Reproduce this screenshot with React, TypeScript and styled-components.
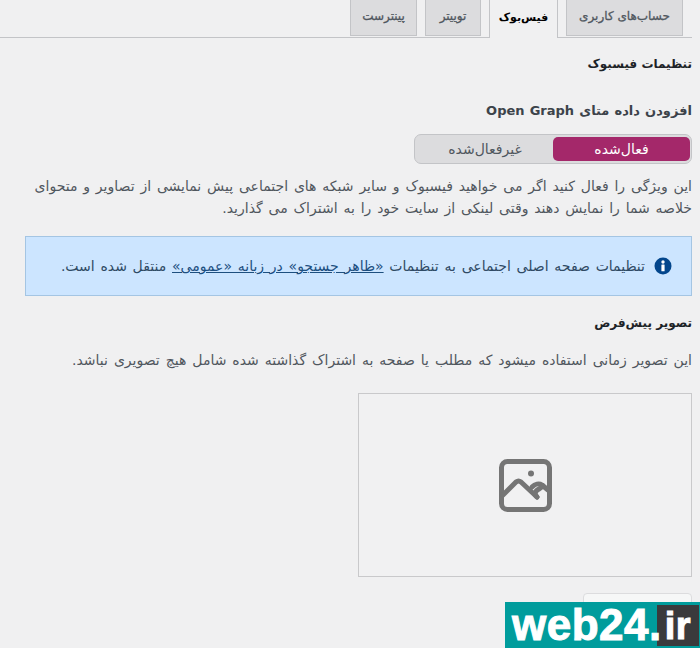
import React from "react";
import styled, { createGlobalStyle } from "styled-components";

const Global = createGlobalStyle`
  html, body { margin: 0; padding: 0; background: #f0f0f1; overflow: hidden; }
  body { font-family: "DejaVu Sans", "Noto Sans", sans-serif; color: #444; }
  * { box-sizing: border-box; }
`;
const Page = styled.div`
  position: relative;
  width: 700px;
  height: 648px;
  overflow: hidden;
  direction: rtl;
  padding-right: 8px;
`;
const TabBar = styled.nav`
  display: flex;
  height: 38px;
  border-bottom: 1px solid #c3c4c7;
  padding-right: 9px;
  gap: 8px;
  align-items: flex-start;
`;
const Tab = styled.div<{ $active?: boolean; $w: number }>`
  width: ${(p) => p.$w}px;
  height: ${(p) => (p.$active ? 38 : 36)}px;
  display: flex;
  align-items: center;
  justify-content: center;
  padding-bottom: 3px;
  font-size: ${(p) => (p.$active ? 11 : 12)}px;
  font-weight: ${(p) => (p.$active ? 700 : 400)};
  -webkit-text-stroke: ${(p) => (p.$active ? 0 : 0.3)}px;
  color: ${(p) => (p.$active ? "#000" : "#50575e")};
  background: ${(p) => (p.$active ? "#f0f0f1" : "#dcdcde")};
  border: 1px solid #c3c4c7;
  border-top: 0;
  ${(p) => p.$active && "border-bottom: 0; margin-bottom: -1px;"}
`;
const Content = styled.main`
  display: flex;
  flex-direction: column;
  align-items: stretch;
  padding-left: 25px;
`;
const Title = styled.h2`
  margin: 17px 0 0;
  font-size: 12px;
  line-height: 18px;
  font-weight: 700;
  color: #1d2327;
`;
const SubTitle = styled.h3<{ $top: number; $size: number; $color: string; $spread?: number }>`
  margin: ${(p) => p.$top}px 0 0;
  font-size: ${(p) => p.$size}px;
  line-height: 18px;
  font-weight: 700;
  word-spacing: ${(p) => p.$spread ?? 0}px;
  color: ${(p) => p.$color};
`;
const Switch = styled.div`
  margin: 14px 0 0;
  align-self: flex-start;
  width: 278px;
  height: 30px;
  padding: 2px 1px 2px 2px;
  display: flex;
  background: #dcdcde;
  border: 1px solid #c3c4c7;
  border-radius: 7px;
`;
const SwitchOption = styled.div<{ $on?: boolean }>`
  flex: ${(p) => (p.$on ? "0 0 137px" : "1")};
  display: flex;
  align-items: center;
  justify-content: center;
  font-size: 14px;
  line-height: 1;
  border-radius: 5px;
  color: ${(p) => (p.$on ? "#fff" : "#50575e")};
  background: ${(p) => (p.$on ? "#a4286a" : "transparent")};
`;
const Para = styled.p<{ $top: number; $spread: number }>`
  margin: ${(p) => p.$top}px 0 0;
  font-size: 14px;
  line-height: 22px;
  word-spacing: ${(p) => p.$spread}px;
  color: #50575e;
`;
const Alert = styled.div`
  margin: 17px 0 0 0;
  height: 60px;
  display: flex;
  align-items: center;
  gap: 9px;
  padding: 0 19px 0 0;
  background: #cce5ff;
  border: 1px solid #a4c5e3;
  font-size: 14px;
  word-spacing: 1.3px;
  color: #2f4a64;
`;
const AlertLink = styled.a`
  color: #1d4f7f;
  text-decoration: underline;
`;
const ImageBox = styled.div`
  margin: 22px 0 0;
  align-self: flex-start;
  width: 334px;
  height: 184px;
  display: flex;
  align-items: center;
  justify-content: center;
  background: #f1f1f2;
  border: 1px solid #c9c9cb;
`;
const UploadButton = styled.div`
  margin-top: 16px;
  align-self: flex-start;
  width: 109px;
  height: 40px;
  background: #f6f7f7;
  border: 1px solid #dcdcde;
  border-radius: 4px;
`;
const Watermark = styled.div`
  position: absolute;
  left: 505px;
  top: 602px;
  width: 195px;
  height: 46px;
  direction: ltr;
  display: flex;
  align-items: center;
  background: #009c9c;
  padding: 0 0 0 7px;
  font-family: "Liberation Sans", sans-serif;
  font-weight: 700;
  font-size: 44px;
  line-height: 1;
  letter-spacing: 0.5px;
  color: #fff;
  -webkit-text-stroke: 1px #fff;
`;
const WatermarkText = styled.span`
  position: relative;
  z-index: 1;
`;
const WatermarkEnd = styled.span`
  position: absolute;
  right: 1px;
  top: 3px;
  bottom: 2px;
  width: 42px;
  display: flex;
  align-items: center;
  justify-content: center;
  font-size: 38px;
  background: #3a3a3c;
`;

const ImageIcon = () => (
  <svg width="53" height="53" viewBox="0 0 53 53" fill="none" stroke="#757575" strokeWidth="5" strokeLinecap="round" strokeLinejoin="round">
    <rect x="2.5" y="2.5" width="48" height="48" rx="6" />
    <circle cx="32" cy="14.5" r="3" fill="#757575" stroke="none" />
    <path d="M4 36 L17 23 Q19.5 21 22 23 L38 38" />
    <path d="M33 28 C36 25 40 24 43 26 L49 31" />
    <path d="M38 38 C35 35 36 32 40 30 L44 27" />
  </svg>
);
const InfoIcon = () => (
  <svg width="18" height="18" viewBox="0 0 18 18">
    <circle cx="9" cy="9" r="8.5" fill="#03468c" />
    <circle cx="9" cy="5" r="1.7" fill="#fff" />
    <rect x="7.4" y="7.6" width="3.2" height="6.6" rx="0.5" fill="#fff" />
  </svg>
);

export default function App() {
  return (
    <Page>
      <Global />
      <TabBar>
        <Tab $w={117}>حساب‌های کاربری</Tab>
        <Tab $w={69} $active>فیس‌بوک</Tab>
        <Tab $w={56}>توییتر</Tab>
        <Tab $w={67}>پینترست</Tab>
      </TabBar>
      <Content>
        <Title>تنظیمات فیسبوک</Title>
        <SubTitle $top={29} $size={13} $color="#3c434a" $spread={0.6}>افزودن داده متای Open Graph</SubTitle>
        <Switch>
          <SwitchOption $on>فعال‌شده</SwitchOption>
          <SwitchOption>غیرفعال‌شده</SwitchOption>
        </Switch>
        <Para $top={11} $spread={1.4}>
          این ویژگی را فعال کنید اگر می خواهید فیسبوک و سایر شبکه های اجتماعی پیش نمایشی از تصاویر و متحوای خلاصه شما را نمایش دهند وقتی لینکی از سایت خود را به اشتراک می گذارید.
        </Para>
        <Alert>
          <InfoIcon />
          <span>
            تنظیمات صفحه اصلی اجتماعی به تنظیمات <AlertLink>«ظاهر جستجو» در زبانه «عمومی»</AlertLink> منتقل شده است.
          </span>
        </Alert>
        <SubTitle $top={18} $size={12} $color="#1d2327">تصویر پیش‌فرض</SubTitle>
        <Para $top={17} $spread={1.5}>این تصویر زمانی استفاده میشود که مطلب یا صفحه به اشتراک گذاشته شده شامل هیچ تصویری نباشد.</Para>
        <ImageBox><ImageIcon /></ImageBox>
        <UploadButton />
      </Content>
      <Watermark>
        <WatermarkText>web24.</WatermarkText>
        <WatermarkEnd>ir</WatermarkEnd>
      </Watermark>
    </Page>
  );
}
